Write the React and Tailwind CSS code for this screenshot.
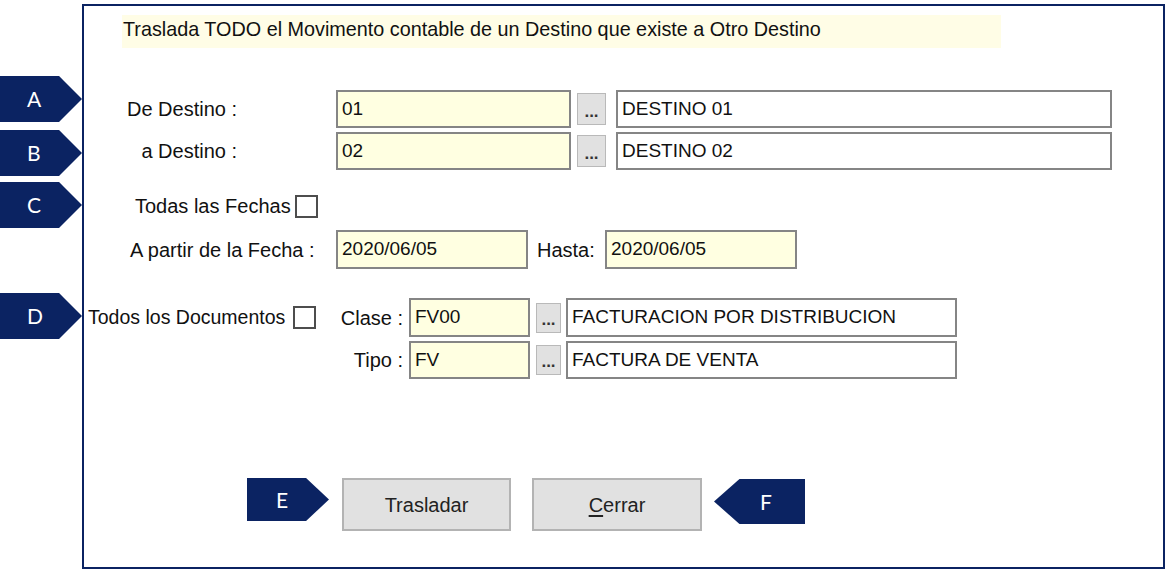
import React from 'react';

const fuente = "font-['Liberation_Sans',Arial,sans-serif]";

// casillas de texto del formulario (solo lectura en la captura)
const Caja = ({ ancho, alto = 'h-[38px]', fondo = 'bg-[#ffffe1]', children }) => (
  <div className={`${ancho} ${alto} ${fondo} border-2 border-[#858585] flex items-center pl-[4px] text-[19px] text-[#111] shrink-0`}>
    {children}
  </div>
);

const Puntos = ({ ancho = 'w-[29px]', alto = 'h-[32px]' }) => (
  <button className={`${ancho} ${alto} bg-[#e1e1e1] border border-[#b9b9b9] flex items-end justify-center pb-[4px] text-[17px] font-bold leading-none text-[#333] shrink-0`}>
    ...
  </button>
);

const Casilla = () => <div className="w-[23px] h-[23px] border-2 border-[#4d4d4d] bg-white shrink-0" />;

const Llamada = ({ letra, clases, izquierda }) => (
  <div
    className={`absolute bg-[#0b2362] text-white flex items-center font-['Lato','Noto_Sans',sans-serif] text-[21px] ${clases} ${
      izquierda
        ? '[clip-path:polygon(0_50%,28%_0,100%_0,100%_100%,28%_100%)] justify-end pr-[33px]'
        : '[clip-path:polygon(0_0,72%_0,100%_50%,72%_100%,0_100%)] justify-start'
    }`}
  >
    {letra}
  </div>
);

const App = () => {
  return (
    <div className={`relative w-[1170px] h-[571px] bg-white overflow-hidden pt-[4px] ${fuente}`}>
      {/* MARCO */}
      <div className="ml-[82px] w-[1083px] h-[565px] border-2 border-[#0b2362] text-[20px] text-[#111]">
        {/* TITULO */}
        <div className="mt-[9px] ml-[38px] w-[879px] h-[33px] bg-[#fffde6] flex items-center pl-[1px] pb-[3px] text-[19.8px]">
          Traslada TODO el Movimento contable de un Destino que existe a Otro Destino
        </div>

        {/* DE DESTINO */}
        <div className="mt-[42px] flex items-center h-[38px]">
          <div className="w-[153px] text-right shrink-0">De Destino :</div>
          <div className="ml-[99px]"><Caja ancho="w-[235px]">01</Caja></div>
          <div className="ml-[6px]"><Puntos /></div>
          <div className="ml-[10px]"><Caja ancho="w-[496px]" fondo="bg-white">DESTINO 01</Caja></div>
        </div>

        {/* A DESTINO */}
        <div className="mt-[4px] flex items-center h-[38px]">
          <div className="w-[153px] text-right shrink-0">a Destino :</div>
          <div className="ml-[99px]"><Caja ancho="w-[235px]">02</Caja></div>
          <div className="ml-[6px]"><Puntos /></div>
          <div className="ml-[10px]"><Caja ancho="w-[496px]" fondo="bg-white">DESTINO 02</Caja></div>
        </div>

        {/* TODAS LAS FECHAS */}
        <div className="mt-[24px] flex items-center h-[24px]">
          <div className="w-[211px] pl-[51px] shrink-0">Todas las Fechas</div>
          <Casilla />
        </div>

        {/* FECHAS */}
        <div className="mt-[12px] flex items-center h-[39px]">
          <div className="w-[252px] pl-[46px] shrink-0">A partir de la Fecha :</div>
          <Caja ancho="w-[192px]" alto="h-[39px]">2020/06/05</Caja>
          <div className="w-[77px] pl-[9px] shrink-0">Hasta:</div>
          <Caja ancho="w-[192px]" alto="h-[39px]">2020/06/05</Caja>
        </div>

        {/* DOCUMENTOS */}
        <div className="mt-[29px] flex items-start">
          <div className="w-[232px] h-[39px] flex items-center shrink-0">
            <div className="w-[209px] pl-[4px] shrink-0 text-[19.5px]">Todos los Documentos</div>
            <Casilla />
          </div>
          <div className="flex flex-col gap-[4px]">
            <div className="flex items-center h-[39px]">
              <div className="w-[93px] text-right pr-[6px] shrink-0">Clase :</div>
              <Caja ancho="w-[121px]" alto="h-[39px]">FV00</Caja>
              <div className="ml-[6px]"><Puntos ancho="w-[25px]" alto="h-[30px]" /></div>
              <div className="ml-[5px]"><Caja ancho="w-[391px]" alto="h-[39px]" fondo="bg-white">FACTURACION POR DISTRIBUCION</Caja></div>
            </div>
            <div className="flex items-center h-[38px]">
              <div className="w-[93px] text-right pr-[6px] shrink-0">Tipo :</div>
              <Caja ancho="w-[121px]">FV</Caja>
              <div className="ml-[6px]"><Puntos ancho="w-[25px]" alto="h-[30px]" /></div>
              <div className="ml-[5px]"><Caja ancho="w-[391px]" fondo="bg-white">FACTURA DE VENTA</Caja></div>
            </div>
          </div>
        </div>

        {/* BOTONES */}
        <div className="mt-[99px] flex items-center">
          <button className="ml-[258px] w-[169px] h-[53px] bg-[#e1e1e1] border-2 border-[#b3b3b3] text-[20px] text-[#222]">
            Trasladar
          </button>
          <button className="ml-[21px] w-[170px] h-[53px] bg-[#e1e1e1] border-2 border-[#b3b3b3] text-[20px] text-[#222]">
            <span className="underline underline-offset-[3px]">C</span>errar
          </button>
        </div>
      </div>

      {/* LLAMADAS */}
      <Llamada letra="A" clases="left-0 top-[76px] w-[82px] h-[46px] pl-[27px]" />
      <Llamada letra="B" clases="left-0 top-[130px] w-[82px] h-[46px] pl-[27px]" />
      <Llamada letra="C" clases="left-0 top-[182px] w-[82px] h-[46px] pl-[27px]" />
      <Llamada letra="D" clases="left-0 top-[293px] w-[82px] h-[46px] pl-[27px]" />
      <Llamada letra="E" clases="left-[247px] top-[478px] w-[82px] h-[43px] pl-[29px]" />
      <Llamada letra="F" clases="left-[714px] top-[479px] w-[91px] h-[45px]" izquierda />
    </div>
  );
};

export default App;
